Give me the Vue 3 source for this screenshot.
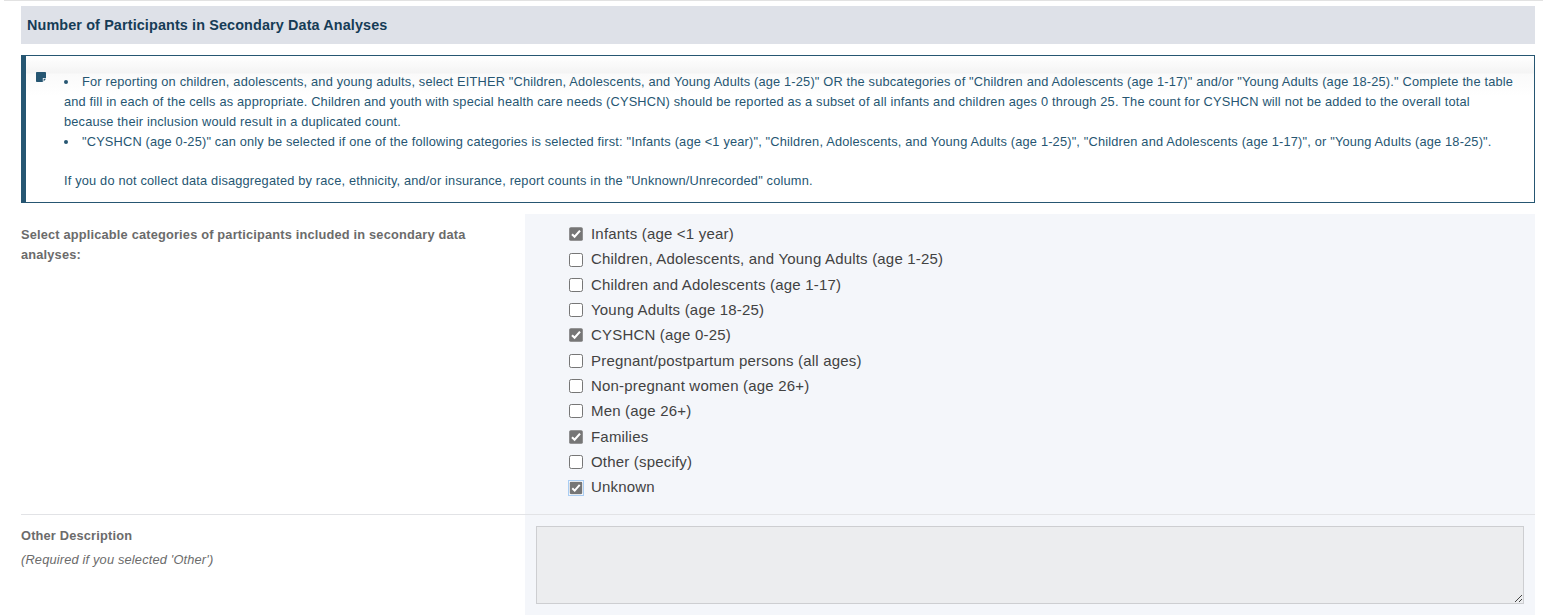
<script setup>
import { ref } from 'vue'

const options = ref([
  { label: 'Infants (age <1 year)', checked: true },
  { label: 'Children, Adolescents, and Young Adults (age 1-25)', checked: false },
  { label: 'Children and Adolescents (age 1-17)', checked: false },
  { label: 'Young Adults (age 18-25)', checked: false },
  { label: 'CYSHCN (age 0-25)', checked: true },
  { label: 'Pregnant/postpartum persons (all ages)', checked: false },
  { label: 'Non-pregnant women (age 26+)', checked: false },
  { label: 'Men (age 26+)', checked: false },
  { label: 'Families', checked: true },
  { label: 'Other (specify)', checked: false },
  { label: 'Unknown', checked: true, focused: true },
])
</script>

<template>
  <main class="page">
    <h2 class="title">Number of Participants in Secondary Data Analyses</h2>

    <section class="note">
      <svg class="note-icon" width="10" height="10" viewBox="0 0 10 10">
        <path d="M.8 0h8.4q.8 0 .8.8V6H6.8v4H.8Q0 10 0 9.2V.8Q0 0 .8 0z" fill="#265672" />
        <path d="M7.6 9.6V6.8H10z" fill="#265672" />
      </svg>
      <div class="note-body">
        <ul>
          <li>For reporting on children, adolescents, and young adults, select EITHER "Children, Adolescents, and Young Adults (age 1-25)" OR the subcategories of "Children and Adolescents (age 1-17)" and/or "Young Adults (age 18-25)." Complete the table<br />and fill in each of the cells as appropriate. Children and youth with special health care needs (CYSHCN) should be reported as a subset of all infants and children ages 0 through 25. The count for CYSHCN will not be added to the overall total<br />because their inclusion would result in a duplicated count.</li>
          <li>"CYSHCN (age 0-25)" can only be selected if one of the following categories is selected first: "Infants (age &lt;1 year)", "Children, Adolescents, and Young Adults (age 1-25)", "Children and Adolescents (age 1-17)", or "Young Adults (age 18-25)".</li>
        </ul>
        <p>If you do not collect data disaggregated by race, ethnicity, and/or insurance, report counts in the "Unknown/Unrecorded" column.</p>
      </div>
    </section>

    <div class="row categories">
      <div class="label">Select applicable categories of participants included in secondary data<br />analyses:</div>
      <div class="field">
        <label v-for="o in options" :key="o.label" class="option">
          <span class="box" :class="{ focused: o.focused }">
            <input v-model="o.checked" type="checkbox" />
            <svg width="14" height="14" viewBox="0 0 14 14">
              <rect v-if="o.checked" x=".2" y=".2" width="13.6" height="13.6" rx="1.6" fill="#767676" />
              <rect v-else x=".5" y=".5" width="13" height="13" rx="1.8" fill="#fff" stroke="#767676" />
              <path v-if="o.checked" d="M3 7.2l2.6 2.6 5.4-6.2" fill="none" stroke="#fff" stroke-width="2.1" />
            </svg>
          </span>
          <span class="text">{{ o.label }}</span>
        </label>
      </div>
    </div>

    <div class="row other">
      <div class="label">
        Other Description
        <em>(Required if you selected 'Other')</em>
      </div>
      <div class="field">
        <div class="textarea">
          <svg width="8" height="8" viewBox="0 0 8 8" shape-rendering="crispEdges">
            <path d="M0 6h1v1H0zM1 5h1v1H1zM2 4h1v1H2zM3 3h1v1H3zM4 2h1v1H4zM5 1h1v1H5zM6 0h1v1H6zM4 6h1v1H4zM5 5h1v1H5zM6 4h1v1H6z" fill="#444" />
          </svg>
        </div>
      </div>
    </div>
  </main>
</template>

<style>
body {
  background: #fff;
  overflow: hidden;
}
</style>

<style scoped>
.page {
  box-sizing: border-box;
  height: 615px;
  overflow: hidden;
  padding: 5px 8px 0 21px;
  font-family: "Liberation Sans", Arial, sans-serif;
  background: linear-gradient(#e2e2e2, #e2e2e2) 4px 0 / 100% 1px no-repeat;
}
.title {
  box-sizing: border-box;
  height: 38px;
  margin: 1px 0 11px;
  padding-left: 6px;
  background: #dee1e8;
  color: #163c56;
  font-size: 14.4px;
  line-height: 38px;
  letter-spacing: .12px;
  white-space: nowrap;
}
.note {
  box-sizing: border-box;
  display: flex;
  height: 148px;
  border: 1px solid #265672;
  border-left-width: 5px;
  background: linear-gradient(#fff 0, #f4f4f4 17px, #fafafa 18px, #fff 40px);
  color: #265672;
  font-size: 12.8px;
  line-height: 20px;
  letter-spacing: .178px;
  white-space: nowrap;
}
.note-icon {
  flex: none;
  margin: 16px 18px 0 10px;
}
.note-body {
  padding-top: 16px;
}
ul {
  margin: 0;
  padding: 0;
  list-style: none;
}
li::before {
  content: "";
  display: inline-block;
  width: 4px;
  height: 4px;
  margin-right: 14px;
  border-radius: 50%;
  background: #265672;
  vertical-align: 2px;
}
p {
  margin: 19px 0 0;
}
.row {
  display: flex;
}
.categories {
  height: 300px;
  margin-top: 11px;
}
.label {
  width: 504px;
  flex: none;
  color: #6b6b6b;
  font-size: 12.8px;
  font-weight: bold;
  line-height: 20px;
  letter-spacing: .18px;
  padding-top: 11px;
  box-sizing: border-box;
  white-space: nowrap;
}
.label em {
  display: block;
  margin-top: 4px;
  font-weight: normal;
}
.field {
  flex: 1;
  background: #f4f6fa;
}
.categories .field {
  padding: 7px 0 0 44px;
}
.option {
  display: flex;
  align-items: center;
  height: 25.3px;
  color: #424242;
  font-size: 15px;
  letter-spacing: .19px;
}
.box {
  display: flex;
  margin-right: 8px;
  position: relative;
  top: .6px;
}
.box input {
  position: absolute;
  opacity: 0;
  margin: 0;
}
.box.focused {
  top: 1.2px;
  outline: 1px solid #a9cdf3;
}
.focused svg {
  transform: scale(.93);
}
.other {
  border-top: 1px solid #e2e3e6;
  height: 100px;
}
.textarea {
  box-sizing: border-box;
  display: flex;
  align-items: flex-end;
  justify-content: flex-end;
  height: 78px;
  margin: 11px 11px 0;
  border: 1px solid #cdced1;
  background: #ecedef;
}
</style>
